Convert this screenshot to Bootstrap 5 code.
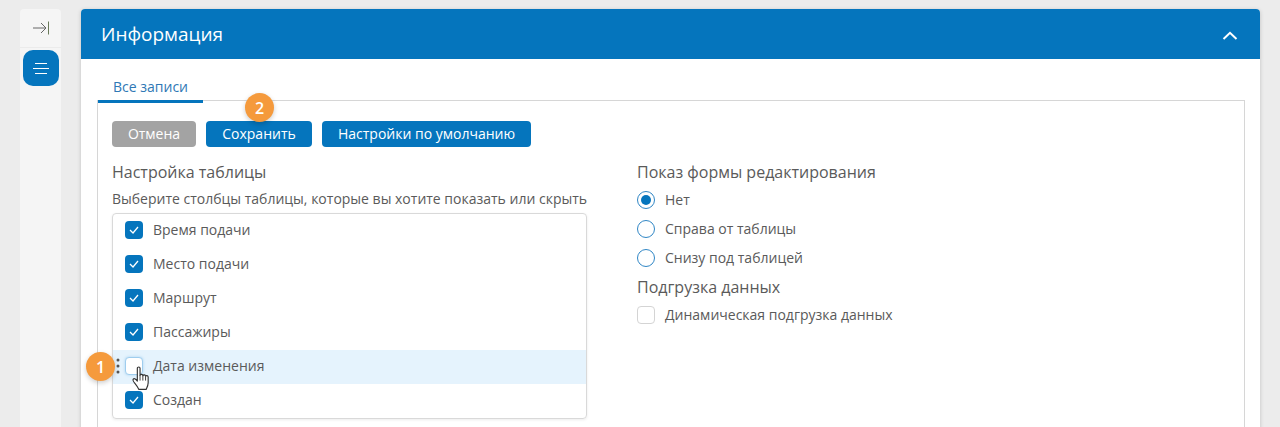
<!DOCTYPE html>
<html lang="ru">
<head>
<meta charset="utf-8">
<title>Информация</title>
<link href="https://cdn.jsdelivr.net/npm/bootstrap@5.3.0/dist/css/bootstrap.min.css" rel="stylesheet">
<style>
html,body{height:427px;overflow:hidden}
body{background:#ececec;font-family:"Open Sans",sans-serif;color:#5a5a5a;font-size:14px;line-height:20px}
.shell{padding:9px 20px 0;gap:20px;height:427px;overflow:hidden}
.rail{width:41px;flex:none;background:#f5f5f5;border-radius:4px 4px 0 0;height:418px}
.rail-top{height:39px;border-bottom:1px solid #ebebeb;margin-bottom:2px}
.rail-btn{width:36px;height:36px;background:#0575bd;border-radius:10px;margin-left:3px}
.panel{flex:1 1 auto;background:#fff;box-shadow:0 1px 4px rgba(0,0,0,.18);border-radius:4px 4px 0 0;position:relative;height:440px}
.panel-head{height:50px;background:#0575bd;color:#fff;border-radius:4px 4px 0 0;padding:0 22px 0 20px;font-size:19px;font-weight:400}
.tabbar{padding:16px 0 0 17px;height:41px}
.tabitem{display:block;width:105px;height:28px;padding-left:15px;color:#2f78b5;font-size:14px;line-height:24px;border-bottom:3px solid #0575bd;position:relative;z-index:1}
.tabpane{margin:0 15px 0 16px;border:1px solid #d6d6d6;padding:20px 14px 0;height:400px}
.pill{height:26px;border:0;border-radius:4px;color:#fff;font-size:14px;font-weight:500;line-height:26px;padding:0;text-align:center}
.pill-grey{width:84px;background:#a3a3a3}
.pill-blue{background:#0575bd}
.w-save{width:106px}.w-def{width:209px}
.toolrow{gap:10px;margin-bottom:14px}
.col-left{width:475px;flex:none}
.col-right{margin-left:50px}
.sect{font-size:16px;line-height:22px}
.hint{font-size:14px;line-height:20px;margin-top:6px;margin-bottom:4px;white-space:nowrap}
.picklist{border:1px solid #d9d9d9;border-radius:4px;box-shadow:0 1px 3px rgba(0,0,0,.08);height:206px;position:relative}
.pickrow{height:34px;padding:0 0 2px 12px;gap:10px}
.pickrow.hot{background:#e5f3fd}
.chk{width:18px;height:18px;border-radius:4px;flex:none;display:flex;align-items:center;justify-content:center;background:#0575bd}
.chk.off{background:#fff;border:1px solid #d4d4d4}
.chk.glow{border:1px solid #9fcdee;box-shadow:0 0 3px #a9d3f1}
.rad{width:18px;height:18px;border-radius:50%;border:1.5px solid #2f86c5;flex:none;background:#fff;display:flex;align-items:center;justify-content:center}
.rad i{display:block;width:10px;height:10px;border-radius:50%;background:#0575bd}
.optrow{height:29px;gap:10px}
.optrow-first{margin-top:2px}
.optrow-last{height:28px;gap:10px}
.sect2{line-height:30px;height:29px}
.step{position:absolute;width:29px;height:29px;border-radius:50%;background:#f59a3c;color:#fff;font-size:16px;font-weight:600;display:flex;align-items:center;justify-content:center;box-shadow:0 2px 5px rgba(0,0,0,.2)}
.step-a{left:5px;top:343px}
.step-b{left:164px;top:84px}
.grip{position:absolute;left:3px;top:144px}
.hand{position:absolute;left:18px;top:152px}
</style>
</head>
<body>
<div class="shell d-flex">
  <div class="rail">
    <div class="rail-top d-flex align-items-center justify-content-center">
      <svg width="16" height="14" viewBox="0 0 16 14" fill="none" stroke="#666" stroke-width="1"><path d="M0 7H13M8 2l5 5-5 5"/><path d="M15.5 0.5v13" stroke="#6a7a5a"/></svg>
    </div>
    <div class="rail-btn d-flex align-items-center justify-content-center">
      <svg width="16" height="11" viewBox="0 0 16 11" stroke="#fff" stroke-width="1"><path d="M2 .5h12M0 5.5h16M2 10.5h12"/></svg>
    </div>
  </div>
  <div class="panel">
    <div class="panel-head d-flex align-items-center justify-content-between">
      <span>Информация</span>
      <svg width="16" height="12" viewBox="0 0 16 12" fill="none" stroke="#fff" stroke-width="2"><path d="M1.5 11L8 4.8 14.5 11"/></svg>
    </div>
    <div class="tabbar"><span class="tabitem">Все записи</span></div>
    <div class="tabpane">
      <div class="toolrow d-flex">
        <button class="pill pill-grey" type="button">Отмена</button>
        <button class="pill pill-blue w-save" type="button">Сохранить</button>
        <button class="pill pill-blue w-def" type="button">Настройки по умолчанию</button>
      </div>
      <div class="d-flex">
        <div class="col-left">
          <div class="sect">Настройка таблицы</div>
          <div class="hint">Выберите столбцы таблицы, которые вы хотите показать или скрыть</div>
          <div class="picklist">
            <div class="pickrow d-flex align-items-center"><span class="chk"><svg width="12" height="10" viewBox="0 0 12 10" fill="none" stroke="#fff" stroke-width="1.3"><path d="M2 5l3 3 5-6"/></svg></span><span>Время подачи</span></div>
            <div class="pickrow d-flex align-items-center"><span class="chk"><svg width="12" height="10" viewBox="0 0 12 10" fill="none" stroke="#fff" stroke-width="1.3"><path d="M2 5l3 3 5-6"/></svg></span><span>Место подачи</span></div>
            <div class="pickrow d-flex align-items-center"><span class="chk"><svg width="12" height="10" viewBox="0 0 12 10" fill="none" stroke="#fff" stroke-width="1.3"><path d="M2 5l3 3 5-6"/></svg></span><span>Маршрут</span></div>
            <div class="pickrow d-flex align-items-center"><span class="chk"><svg width="12" height="10" viewBox="0 0 12 10" fill="none" stroke="#fff" stroke-width="1.3"><path d="M2 5l3 3 5-6"/></svg></span><span>Пассажиры</span></div>
            <div class="pickrow hot d-flex align-items-center"><span class="chk off glow"></span><span>Дата изменения</span></div>
            <div class="pickrow d-flex align-items-center"><span class="chk"><svg width="12" height="10" viewBox="0 0 12 10" fill="none" stroke="#fff" stroke-width="1.3"><path d="M2 5l3 3 5-6"/></svg></span><span>Создан</span></div>
            <svg class="grip" width="4" height="16" viewBox="0 0 4 16" fill="#555"><circle cx="2" cy="2" r="1.5"/><circle cx="2" cy="8" r="1.5"/><circle cx="2" cy="14" r="1.5"/></svg>
            <svg class="hand" width="21" height="25" viewBox="0 0 20 24"><path d="M6 2.2c0-1.6 2.6-1.6 2.6 0V9c.4-1.4 2.6-1.2 2.7.3.5-1.2 2.5-1 2.6.5.6-1 2.4-.7 2.5.8V16c0 3-1.6 5.5-2 6.5H7.5C6.5 20.5 5.5 19 3.5 16.5 2.3 15 1.2 13.4 2.2 12.5c1-.9 2.4.3 3.8 2z" fill="#fff" stroke="#333" stroke-width="1.1" stroke-linejoin="round"/><path d="M8.6 9v5M11.3 9.5V14M13.9 10v4" stroke="#333" stroke-width=".9" fill="none"/></svg>
          </div>
        </div>
        <div class="col-right">
          <div class="sect">Показ формы редактирования</div>
          <div class="optrow optrow-first d-flex align-items-center"><span class="rad"><i></i></span><span>Нет</span></div>
          <div class="optrow d-flex align-items-center"><span class="rad"></span><span>Справа от таблицы</span></div>
          <div class="optrow d-flex align-items-center"><span class="rad"></span><span>Снизу под таблицей</span></div>
          <div class="sect sect2">Подгрузка данных</div>
          <div class="optrow-last d-flex align-items-center"><span class="chk off"></span><span>Динамическая подгрузка данных</span></div>
        </div>
      </div>
    </div>
    <span class="step step-a">1</span>
    <span class="step step-b">2</span>
  </div>
</div>
<script src="https://cdn.jsdelivr.net/npm/bootstrap@5.3.0/dist/js/bootstrap.bundle.min.js"></script>
</body>
</html>
